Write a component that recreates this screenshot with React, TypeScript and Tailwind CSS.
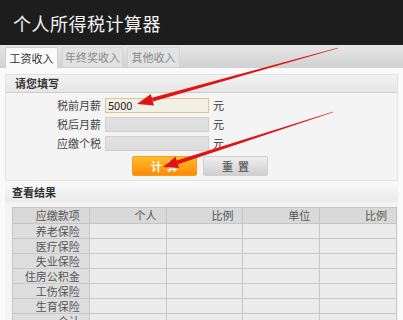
const FONT = '"Noto Sans CJK SC", "Liberation Sans", sans-serif'

const tabs = ['工资收入', '年终奖收入', '其他收入']
const fields = ['税前月薪', '税后月薪', '应缴个税']
const rows = ['养老保险', '医疗保险', '失业保险', '住房公积金', '工伤保险', '生育保险', '合计']
const heads = ['应缴款项', '个人', '比例', '单位', '比例']

function Arrows() {
  return (
    <svg className="absolute inset-0 pointer-events-none" width="403" height="320" viewBox="0 0 403 320">
      <polygon points="338.1,48.3 337.9,47.7 151.9,97.8 152.9,101.6" fill="#e01414" />
      <polygon points="137,104 154,105.5 150.8,93.9" fill="#e01414" />
      <polygon points="333.1,112.3 332.9,111.7 176.7,160.5 177.9,164.3" fill="#e01414" />
      <polygon points="163,167 179.1,168.1 175.5,156.7" fill="#e01414" />
    </svg>
  )
}

export default function App() {
  return (
    <div className="relative w-[403px] h-[320px] overflow-hidden bg-[#fafafa]" style={{ fontFamily: FONT }}>
      {/* Header */}
      <div className="h-[45px] bg-[#1d1d1d] flex items-center px-[13px]">
        <h1 className="text-[18px] leading-none text-[#f2f2f2] tracking-[0.5px]">个人所得税计算器</h1>
      </div>

      {/* Tabs */}
      <div className="h-[23px] bg-gradient-to-b from-[#e6e6e6] to-[#d2d2d2] flex items-end gap-[4px] px-[5px] border-b border-[#cfcfcf]">
        {tabs.map((t, i) => (
          <div
            key={t}
            className={`h-[20px] flex items-center justify-center text-[11px] border border-b-0 ${
              i === 0
                ? 'w-[53px] bg-[#fafafa] border-[#cfcfcf] text-[#333] h-[21px] -mb-px'
                : i === 1 ? 'w-[61px] bg-[#e2e2e2] border-[#d4d4d4] text-[#888]' : 'w-[53px] bg-[#e2e2e2] border-[#d4d4d4] text-[#888]'
            }`}
          >
            {t}
          </div>
        ))}
      </div>

      <div className="px-[5px] pt-[6px]">
        {/* Input panel */}
        <div className="bg-[#f4f4f4] border border-[#e2e2e2]">
          <div className="h-[18px] bg-gradient-to-b from-[#f2f2f2] to-[#e6e6e6] border-b border-[#cdcdcd] flex items-center px-[9px]">
            <span className="text-[11px] font-bold text-[#333]">请您填写</span>
          </div>
          <div className="pt-[5px] pb-[4px] flex flex-col gap-[4px]">
            {fields.map((f, i) => (
              <div key={f} className="flex items-center h-[15px]">
                <span className="w-[95px] text-right text-[11px] text-[#444]">{f}</span>
                <div
                  className={`ml-[4px] w-[104px] h-[15px] flex items-center px-[2px] text-[11px] text-[#222] border ${
                    i === 0 ? 'bg-[#f1efe6] border-[#e0c48a]' : 'bg-gradient-to-b from-[#e2e2e2] to-[#dcdcdc] border-[#d0d0d0]'
                  }`}
                >
                  {i === 0 ? '5000' : ''}
                </div>
                <span className="ml-[4px] text-[11px] text-[#333]">元</span>
              </div>
            ))}
            <div className="flex gap-[6px] pl-[126px] pt-[1px]">
              <button className="w-[65px] h-[20px] rounded-[2px] bg-gradient-to-b from-[#ffbd2a] to-[#ff8a00] border border-[#f0a020] text-white text-[11px] font-bold">
                计&nbsp;&nbsp;算
              </button>
              <button className="w-[65px] h-[20px] rounded-[2px] bg-gradient-to-b from-[#efefef] to-[#cfcfcf] border border-[#d0d0d0] text-[#666] text-[11px] font-bold">
                重&nbsp;&nbsp;置
              </button>
            </div>
          </div>
        </div>

        {/* Results */}
        <div className="mt-[2px] bg-[#f4f4f4]">
          <div className="h-[19px] bg-gradient-to-b from-[#f8f8f8] to-[#eaeaea] flex items-center px-[7px]">
            <span className="text-[11px] font-bold text-[#333]">查看结果</span>
          </div>
          <div className="pl-[7px] pr-[1px] pt-[5px]">
            <table className="w-[385px] border-collapse text-[11px] text-[#555] table-fixed">
              <thead>
                <tr className="h-[16px] bg-[#d9d9d9]">
                  {heads.map((h, i) => (
                    <th key={i} className="font-normal text-right pr-[9px] border border-[#c4c4c4] leading-none">{h}</th>
                  ))}
                </tr>
              </thead>
              <tbody>
                {rows.map(r => (
                  <tr key={r} className="h-[15px]">
                    <td className="bg-[#dedede] text-right pr-[9px] border border-[#c8c8c8] leading-none">{r}</td>
                    <td className="bg-[#ececec] border border-[#c8c8c8]" />
                    <td className="bg-[#ececec] border border-[#c8c8c8]" />
                    <td className="bg-[#ececec] border border-[#c8c8c8]" />
                    <td className="bg-[#ececec] border border-[#c8c8c8]" />
                  </tr>
                ))}
              </tbody>
            </table>
          </div>
        </div>
      </div>

      <Arrows />
    </div>
  )
}
